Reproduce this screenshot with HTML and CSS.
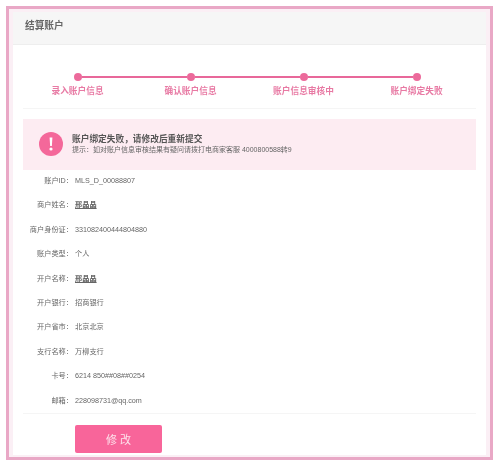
FILE: index.html
```html
<!DOCTYPE html>
<html lang="zh-CN">
<head>
    <meta charset="UTF-8">
    <title>结算账户</title>
    <link rel="stylesheet" href="styles.css">
</head>
<body>
<div class="frame">
    <div class="panel-head">结算账户</div>
    <div class="panel-body">
        <div class="steps">
            <div class="track">
                <span class="dot"></span><span class="line"></span>
                <span class="dot"></span><span class="line"></span>
                <span class="dot"></span><span class="line"></span>
                <span class="dot"></span>
            </div>
            <div class="step-labels">
                <span>录入账户信息</span>
                <span>确认账户信息</span>
                <span>账户信息审核中</span>
                <span>账户绑定失败</span>
            </div>
        </div>

        <div class="alert">
            <svg class="alert-icon" viewBox="0 0 24 24" width="24" height="24">
                <circle cx="12" cy="12" r="12" fill="#f4689a"/>
                <path d="M10.6 5.5h2.8l-.5 8.5h-1.800z" fill="#fff"/>
                <circle cx="12" cy="17" r="1.600" fill="#fff"/>
            </svg>
            <div class="alert-text">
                <h3>账户绑定失败，请修改后重新提交</h3>
                <p>提示：如对账户信息审核结果有疑问请拨打电商家客服 4000800588转9</p>
            </div>
        </div>

        <div class="info">
            <div class="row"><label>账户ID：</label><span>MLS_D_00088807</span></div>
            <div class="row"><label>商户姓名：</label><span class="masked">邢晶晶</span></div>
            <div class="row"><label>商户身份证：</label><span>331082400444804880</span></div>
            <div class="row"><label>账户类型：</label><span>个人</span></div>
            <div class="row"><label>开户名称：</label><span class="masked">邢晶晶</span></div>
            <div class="row"><label>开户银行：</label><span>招商银行</span></div>
            <div class="row"><label>开户省市：</label><span>北京北京</span></div>
            <div class="row"><label>支行名称：</label><span>万柳支行</span></div>
            <div class="row"><label>卡号：</label><span>6214 850##08##0254</span></div>
            <div class="row"><label>邮箱：</label><span>228098731@qq.com</span></div>
        </div>

        <div class="actions">
            <button class="btn">修 改</button>
        </div>
    </div>
</div>
</body>
</html>
```

FILE: styles.css
```css
* {
    box-sizing: border-box;
}
html, body {
    height: 100%;
}
body {
    margin: 0;
    padding: 6px 6px 4px 6px;
    background-color: #fff;
    font-family: "Liberation Sans", "Noto Sans CJK SC", sans-serif;
    color: #666;
}
.frame {
    width: 487px;
    height: 454px;
    padding: 3px 4px;
    background-color: #fbeff5;
    border: 3px solid #e9a8c6;
    filter: blur(0.4px);
}
.panel-head {
    height: 33px;
    padding-left: 12px;
    line-height: 27px;
    font-size: 9.700px;
    font-weight: bold;
    color: #666;
    background-color: #f6f6f6;
    border-bottom: 1px solid #eee;
}
.panel-body {
    height: 410px;
    padding: 0 10px;
    background-color: #fff;
}
.steps {
    padding-top: 28px;
    height: 64px;
    border-bottom: 1px solid #f5f5f5;
}
.track {
    display: flex;
    align-items: center;
    padding: 0 55px 0 51px;
}
.dot {
    flex: none;
    width: 8px;
    height: 8px;
    border-radius: 50%;
    background-color: #ec6a9b;
}
.line {
    flex: 1;
    height: 2.500px;
    background-color: #e8689a;
}
.step-labels {
    display: grid;
    grid-template-columns: repeat(4, 113px);
    margin: 4px 0 0 -2px;
    text-align: center;
    font-size: 8.700px;
    line-height: 12px;
    font-weight: bold;
    color: #e87aa4;
}
.alert {
    display: flex;
    align-items: center;
    gap: 9px;
    height: 51px;
    margin-top: 10px;
    padding-left: 16px;
    background-color: #fdecf2;
}
.alert-icon {
    margin-bottom: 2px;
}
.alert-text h3 {
    margin: 0;
    font-size: 8.700px;
    line-height: 11px;
    color: #555;
}
.alert-text p {
    margin: 0;
    font-size: 7px;
    line-height: 10px;
    color: #666;
}
.info {
    padding-top: 4px;
    height: 244px;
    border-bottom: 1px solid #f5f5f5;
}
.row {
    display: flex;
    height: 24.400px;
    line-height: 14px;
    font-size: 7.200px;
    color: #666;
}
.row label {
    width: 50px;
    text-align: right;
}
.row span {
    margin-left: 2px;
}
.masked {
    text-decoration: underline;
    font-weight: bold;
}
.actions {
    padding: 11px 0 0 52px;
}
.btn {
    display: block;
    width: 87px;
    height: 28px;
    padding: 0;
    border: none;
    border-radius: 2px;
    background-color: #f8659a;
    color: #fde3ec;
    font-family: inherit;
    font-size: 11px;
}
```
